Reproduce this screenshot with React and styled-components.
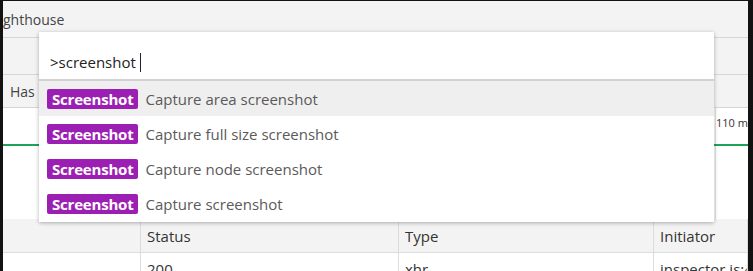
import React from 'react';
import styled, { createGlobalStyle } from 'styled-components';

const GlobalStyle = createGlobalStyle`
  html, body {
    margin: 0;
    padding: 0;
    background: #121212;
  }
  body {
    font-family: 'Open Sans', 'Noto Sans', sans-serif;
  }
`;

const Frame = styled.div`
  position: relative;
  width: 753px;
  height: 271px;
  box-sizing: border-box;
  padding: 1px 5px 0 3px;
  background: #121212;
  overflow: hidden;
`;

const Panel = styled.div`
  height: 100%;
  background: #fff;
  display: flex;
  flex-direction: column;
  color: #333;
  font-size: 13px;
`;

const Bar = styled.div`
  height: ${({ h }) => h}px;
  flex: none;
  display: flex;
  align-items: center;
  background: #f3f3f3;
  border-bottom: 1px solid #d6d6d6;
  padding-left: ${({ pad }) => pad || 0}px;
  box-sizing: border-box;
  font-size: 14px;
  color: #444;
`;

const Overview = styled.div`
  position: relative;
  height: 111px;
  flex: none;
  display: grid;
  grid-template-columns: 1fr 33px;
  grid-template-rows: 24px 14px 1fr;
`;

const Divider = styled.div`
  grid-column: 2;
  grid-row: 1 / 4;
  border-left: 1px solid #e2e2e2;
`;

const Tick = styled.span`
  grid-column: 2;
  grid-row: 1;
  font-size: 11px;
  color: #333;
  padding: 7px 0 0 1px;
  white-space: nowrap;
  overflow: hidden;
`;

const GreenLine = styled.div`
  grid-column: 1 / 3;
  grid-row: 2;
  align-self: end;
  height: 2px;
  background: #1ea35a;
`;

const Table = styled.div`
  display: grid;
  grid-template-columns: 138px 258px 255px 1fr;
`;

const Cell = styled.div`
  height: ${({ head }) => (head ? 34 : 30)}px;
  box-sizing: border-box;
  display: flex;
  padding: ${({ head }) => (head ? '0 6px' : '6px 6px 0')};
  align-items: ${({ head }) => (head ? 'center' : 'flex-start')};
  background: ${({ head }) => (head ? '#f3f3f3' : '#fff')};
  border-right: 1px solid #dcdcdc;
  border-bottom: 1px solid #dcdcdc;
  font-size: 15px;
  color: #333;
  white-space: nowrap;
  overflow: hidden;
`;

const Dialog = styled.div`
  position: absolute;
  left: 39px;
  top: 32px;
  width: 675px;
  height: 190px;
  background: #fff;
  box-shadow: 0 1px 4px rgba(0, 0, 0, 0.3);
  display: flex;
  flex-direction: column;
`;

const Prompt = styled.div`
  height: 49px;
  flex: none;
  box-sizing: border-box;
  padding: 20px 0 0 11px;
  display: flex;
  align-items: flex-start;
  font-size: 15px;
  color: #222;
  border-bottom: 2px solid #d2d2d2;
`;

const Caret = styled.span`
  display: inline-block;
  width: 1px;
  height: 19px;
  margin: 1px 0 0 4px;
  background: #222;
`;

const List = styled.div`
  display: flex;
  flex-direction: column;
`;

const Item = styled.div`
  height: 35px;
  display: flex;
  align-items: center;
  gap: 7px;
  padding-left: 8px;
  background: ${({ active }) => (active ? '#efefef' : 'transparent')};
`;

const Badge = styled.span`
  height: 20px;
  display: inline-flex;
  align-items: center;
  padding: 0 5px;
  border-radius: 2px;
  background: #9c1fb3;
  color: #fff;
  font-weight: 700;
  font-size: 15px;
  letter-spacing: -0.2px;
`;

const Label = styled.span`
  font-size: 15px;
  color: #5a5a5a;
`;

const commands = [
  'Capture area screenshot',
  'Capture full size screenshot',
  'Capture node screenshot',
  'Capture screenshot',
];

export default function App() {
  return (
    <>
      <GlobalStyle />
      <Frame>
        <Panel>
          <Bar h={37}>ghthouse</Bar>
          <Bar h={37} />
          <Bar h={33} pad={7}>Has</Bar>
          <Overview>
            <Tick>110 ms</Tick>
            <Divider />
            <GreenLine />
          </Overview>
          <Table>
            <Cell head />
            <Cell head>Status</Cell>
            <Cell head>Type</Cell>
            <Cell head>Initiator</Cell>
            <Cell />
            <Cell>200</Cell>
            <Cell>xhr</Cell>
            <Cell>inspector.js:4</Cell>
          </Table>
        </Panel>
        <Dialog>
          <Prompt>
            &gt;screenshot
            <Caret />
          </Prompt>
          <List>
            {commands.map((c, i) => (
              <Item key={c} active={i === 0}>
                <Badge>Screenshot</Badge>
                <Label>{c}</Label>
              </Item>
            ))}
          </List>
        </Dialog>
      </Frame>
    </>
  );
}
